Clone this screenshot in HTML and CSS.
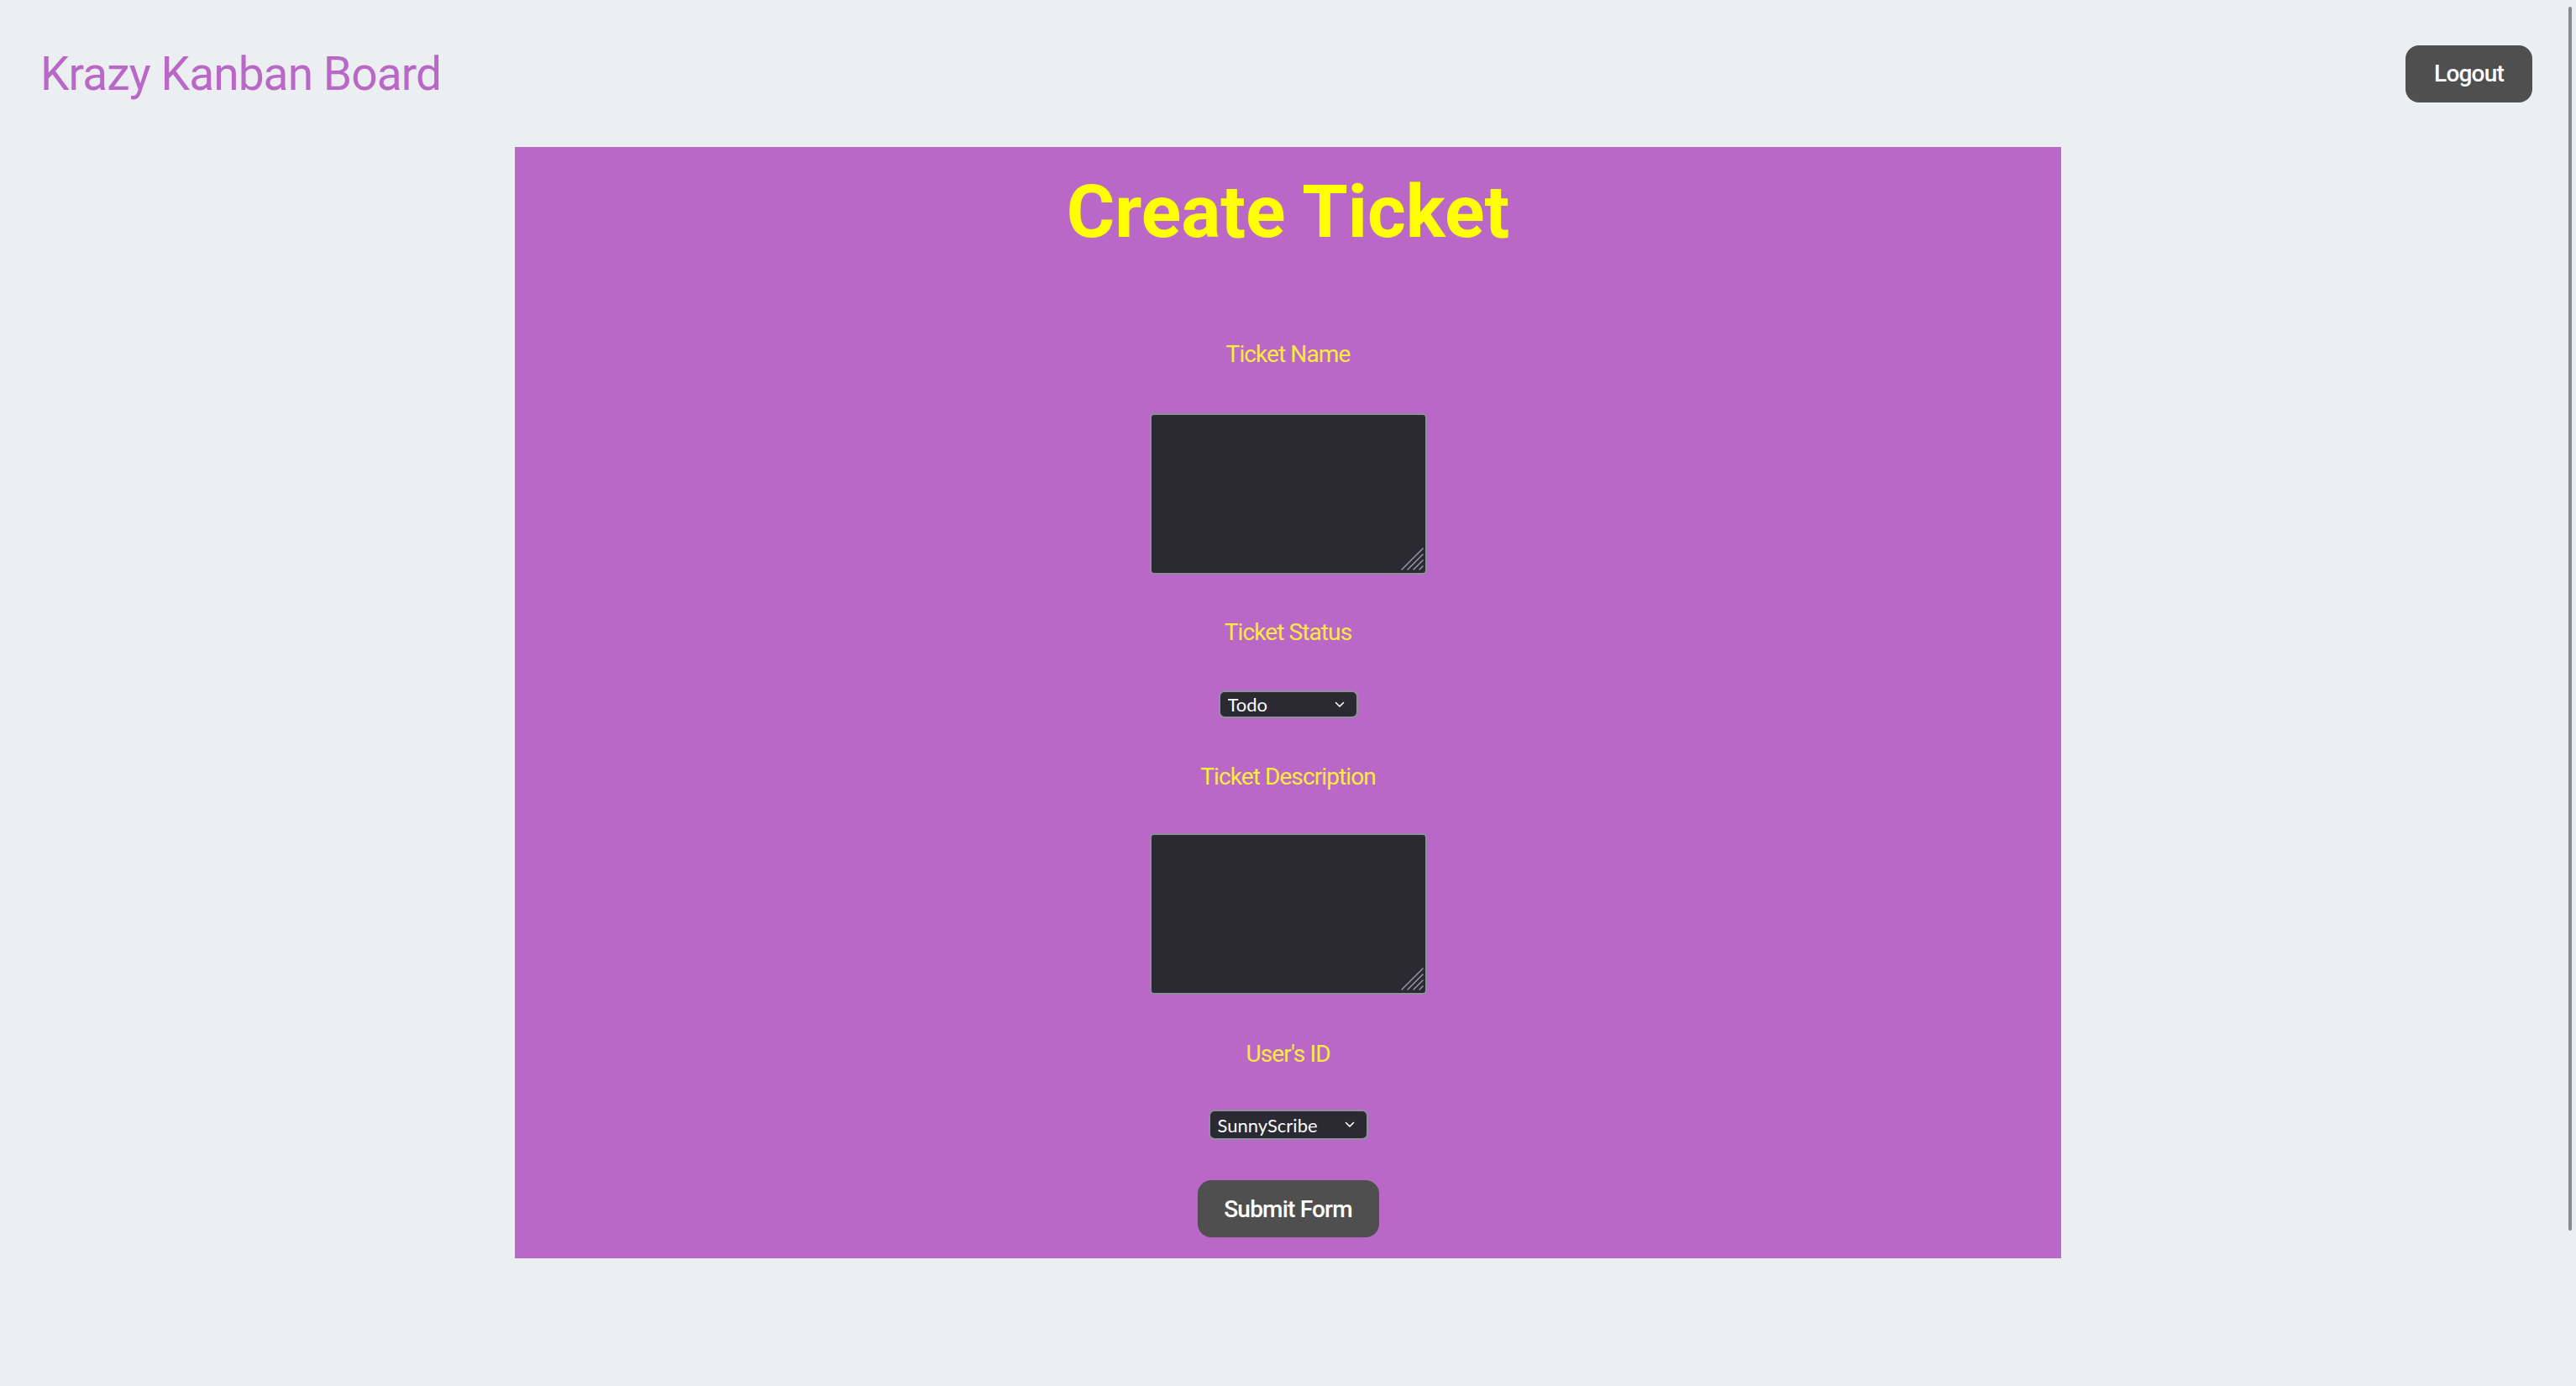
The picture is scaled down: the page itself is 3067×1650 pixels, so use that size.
FILE: index.html
```html
<!DOCTYPE html>
<html lang="en">
<head>
<meta charset="utf-8">
<title>Krazy Kanban Board</title>
<link rel="stylesheet" href="styles.css">
</head>
<body>
<div class="page">
  <header class="nav">
    <h2 class="brand">Krazy Kanban Board</h2>
    <button class="btn logout" type="button">Logout</button>
  </header>
  <main class="card">
    <h1 class="card-title">Create Ticket</h1>
    <form class="form">
      <label class="label label-first" for="tName">Ticket Name</label>
      <span class="ta-wrap ta-gap-53">
        <textarea id="tName" class="ta"></textarea>
        <svg class="grip" width="30" height="30" viewBox="0 0 30 30" aria-hidden="true">
          <g stroke="#9a98a6" stroke-width="1.4" stroke-linecap="round">
            <line x1="3" y1="28" x2="28" y2="3"/>
            <line x1="10" y1="28" x2="28" y2="10"/>
            <line x1="17" y1="28" x2="28" y2="17"/>
            <line x1="24" y1="28" x2="28" y2="24"/>
          </g>
        </svg>
      </span>
      <label class="label gap-52" for="tStatus">Ticket Status</label>
      <span class="sel-wrap gap-52">
        <select id="tStatus" class="sel sel-status">
          <option>Todo</option>
          <option>In Progress</option>
          <option>Done</option>
        </select>
        <svg class="chev" width="12" height="8" viewBox="0 0 12 8" aria-hidden="true"><path d="M1.5 1.5 L6 6 L10.5 1.5" fill="none" stroke="#ffffff" stroke-width="1.6" stroke-linecap="round" stroke-linejoin="round"/></svg>
      </span>
      <label class="label gap-53" for="tDesc">Ticket Description</label>
      <span class="ta-wrap ta-gap-50">
        <textarea id="tDesc" class="ta"></textarea>
        <svg class="grip" width="30" height="30" viewBox="0 0 30 30" aria-hidden="true">
          <g stroke="#9a98a6" stroke-width="1.4" stroke-linecap="round">
            <line x1="3" y1="28" x2="28" y2="3"/>
            <line x1="10" y1="28" x2="28" y2="10"/>
            <line x1="17" y1="28" x2="28" y2="17"/>
            <line x1="24" y1="28" x2="28" y2="24"/>
          </g>
        </svg>
      </span>
      <label class="label gap-54" for="tUser">User's ID</label>
      <span class="sel-wrap gap-49">
        <select id="tUser" class="sel sel-user">
          <option>SunnyScribe</option>
          <option>RadiantComet</option>
        </select>
        <svg class="chev" width="12" height="8" viewBox="0 0 12 8" aria-hidden="true"><path d="M1.5 1.5 L6 6 L10.5 1.5" fill="none" stroke="#ffffff" stroke-width="1.6" stroke-linecap="round" stroke-linejoin="round"/></svg>
      </span>
      <button class="btn submit" type="button">Submit Form</button>
    </form>
  </main>
</div>
<div class="scroll-thumb" aria-hidden="true"></div>
</body>
</html>
```

FILE: styles.css
```css
* { box-sizing: border-box; }

html, body {
  margin: 0;
  padding: 0;
  background: #eceff1;
  height: 100%;
}

body {
  font-family: Roboto, "Noto Sans", sans-serif;
}

.page {
  width: 100%;
}

.nav {
  height: 175px;
  display: flex;
  align-items: center;
  justify-content: space-between;
  padding: 0 52px 0 48px;
}

.brand {
  margin: 0;
  font-family: Roboto, sans-serif;
  font-weight: 400;
  font-size: 55px;
  line-height: 66px;
  letter-spacing: -0.9px;
  color: #ba68c8;
}

.btn {
  border: none;
  background: #4f4f4f;
  color: #ffffff;
  font-family: Roboto, sans-serif;
  font-weight: 500;
  font-size: 28px;
  letter-spacing: -0.8px;
  border-radius: 16px;
  cursor: pointer;
  display: flex;
  align-items: center;
  justify-content: center;
}

.logout {
  width: 151px;
  height: 68px;
}

.card {
  width: 60%;
  margin: 0 auto;
  background: #ba68c8;
  padding: 25px 0 25px;
  display: flex;
  flex-direction: column;
  align-items: center;
}

.card-title {
  margin: 0;
  font-family: Roboto, sans-serif;
  font-weight: 700;
  font-size: 88px;
  line-height: 104px;
  color: #ffff00;
}

.form {
  display: flex;
  flex-direction: column;
  align-items: center;
}

.label {
  display: block;
  font-family: Roboto, sans-serif;
  font-size: 28px;
  line-height: 34px;
  letter-spacing: -0.9px;
  color: #ffeb3b;
}

.label-first { margin-top: 101px; }
.gap-52 { margin-top: 52px; }
.gap-53 { margin-top: 53px; }
.gap-54 { margin-top: 54px; }
.gap-49 { margin-top: 49px; }
.ta-gap-53 { margin-top: 53px; }
.ta-gap-50 { margin-top: 50px; }

.ta-wrap {
  position: relative;
  display: block;
  width: 330px;
  height: 192px;
}

.ta {
  display: block;
  width: 100%;
  height: 100%;
  background: #2b2a33;
  border: 2px solid #8f8f9d;
  border-radius: 5px;
  color: #fbfbfe;
  resize: none;
  font-family: "Liberation Mono", monospace;
  font-size: 26px;
  padding: 4px;
  outline: none;
}

.grip {
  position: absolute;
  right: 3px;
  bottom: 4px;
}

.sel-wrap {
  position: relative;
  display: block;
}

.sel {
  display: block;
  appearance: none;
  -webkit-appearance: none;
  background: #2b2a33;
  border: 2px solid #8f8f9d;
  border-radius: 7px;
  color: #fbfbfe;
  font-family: Lato, "Open Sans", sans-serif;
  font-size: 22px;
  padding: 0 0 0 9px;
  outline: none;
}

.sel-status { width: 166px; height: 33px; }
.sel-user { width: 190px; height: 36px; }

.chev {
  position: absolute;
  right: 16px;
  top: 50%;
  transform: translateY(-50%);
  pointer-events: none;
}

.submit {
  margin-top: 48px;
  width: 216px;
  height: 68px;
}

.scroll-thumb {
  position: fixed;
  top: 8px;
  right: 5px;
  width: 4px;
  height: 1457px;
  border-radius: 2px;
  background: #8a8a8a;
}
```
